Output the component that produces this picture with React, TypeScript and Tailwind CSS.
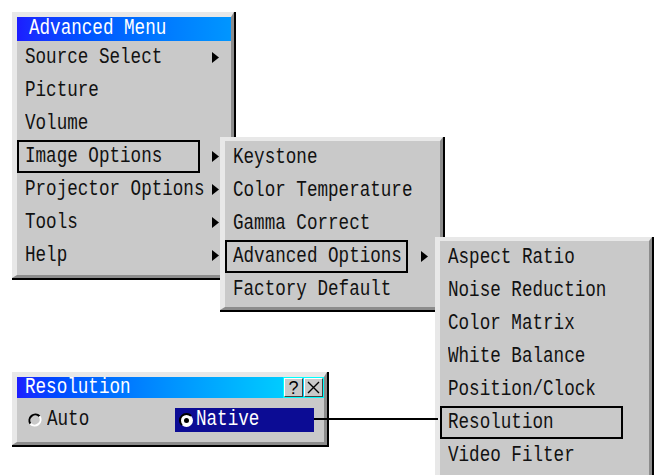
import React from 'react';

type Item = { label: string; arrow?: boolean; selected?: boolean };

const mono = "font-['Liberation_Mono',monospace] text-[17.6px] leading-none";

const Label = ({ children, className = '' }: { children: React.ReactNode; className?: string }) => (
  <span className={`inline-block origin-center scale-y-[1.3] whitespace-pre ${mono} ${className}`}>{children}</span>
);

const Arrow = () => (
  <svg width="7" height="11" viewBox="0 0 7 11">
    <path d="M0 0 L7 5.5 L0 11 Z" fill="#000" />
  </svg>
);

const Row = ({ item, arrowGap }: { item: Item; arrowGap: string }) => (
  <div className="flex h-[33px] items-center">
    <div
      className={`flex h-full w-[183px] shrink-0 items-center border-2 pl-[6px] ${
        item.selected ? 'border-black' : 'border-transparent'
      }`}
    >
      <Label className="text-[#111]">{item.label}</Label>
    </div>
    {item.arrow && <div className={`flex items-center ${arrowGap}`}><Arrow /></div>}
  </div>
);

// raised grey window: light top/left, grey + black bottom/right
const Panel = ({
  className,
  top = 'border-t-[5px]',
  children,
}: {
  className: string;
  top?: string;
  children: React.ReactNode;
}) => (
  <div className={`absolute bg-black pr-[2px] pb-[2px] ${className}`}>
    <div
      className={`h-full border-l-[5px] border-r-[3px] border-b-[3px] ${top} border-t-[#e8e8e8] border-l-[#e8e8e8] border-r-[#8c8c8c] border-b-[#8c8c8c] bg-[#c9c9c9]`}
    >
      {children}
    </div>
  </div>
);

const mainMenu: Item[] = [
  { label: 'Source Select', arrow: true },
  { label: 'Picture' },
  { label: 'Volume' },
  { label: 'Image Options', arrow: true, selected: true },
  { label: 'Projector Options', arrow: true },
  { label: 'Tools', arrow: true },
  { label: 'Help', arrow: true },
];

const imageMenu: Item[] = [
  { label: 'Keystone' },
  { label: 'Color Temperature' },
  { label: 'Gamma Correct' },
  { label: 'Advanced Options', arrow: true, selected: true },
  { label: 'Factory Default' },
];

const advancedMenu: Item[] = [
  { label: 'Aspect Ratio' },
  { label: 'Noise Reduction' },
  { label: 'Color Matrix' },
  { label: 'White Balance' },
  { label: 'Position/Clock' },
  { label: 'Resolution', selected: true },
  { label: 'Video Filter' },
];

const RadioOff = () => (
  <svg width="14" height="14" viewBox="0 0 14 14">
    <circle cx="7" cy="7" r="6" fill="#c9c9c9" />
    <path d="M11.6 3.2 A6 6 0 0 0 2.4 10.8" fill="none" stroke="#000" strokeWidth="2" />
    <path d="M2.4 10.8 A6 6 0 0 0 11.6 3.2" fill="none" stroke="#fff" strokeWidth="2" />
  </svg>
);

const RadioOn = () => (
  <svg width="15" height="15" viewBox="0 0 15 15">
    <circle cx="7.5" cy="7.5" r="6.5" fill="#fff" />
    <path d="M12.1 2.9 A6.5 6.5 0 0 0 2.9 12.1" fill="none" stroke="#000" strokeWidth="2" />
    <circle cx="7.5" cy="7.5" r="2.5" fill="#000" />
  </svg>
);

const TitleButton = ({ children }: { children: React.ReactNode }) => (
  <div className="flex h-[19px] w-[19px] items-center justify-center border border-t-white border-l-white border-r-[#404040] border-b-[#404040] bg-[#c9c9c9]">
    {children}
  </div>
);

export default function App() {
  return (
    <div className="relative h-[475px] w-[656px] overflow-hidden bg-white">
      {/* Advanced Menu */}
      <Panel className="left-[12px] top-[12px] h-[268px] w-[224px]">
        <div className="flex h-[24px] items-center bg-linear-to-r from-[#1c1cff] to-[#0096ff] pl-[12px]">
          <Label className="text-white">Advanced Menu</Label>
        </div>
        {mainMenu.map((it) => (
          <Row key={it.label} item={it} arrowGap="ml-[12px]" />
        ))}
      </Panel>

      {/* Image Options submenu */}
      <Panel className="left-[220px] top-[137px] h-[175px] w-[225px]" top="border-t-[4px]">
        {imageMenu.map((it) => (
          <Row key={it.label} item={it} arrowGap="ml-[13px]" />
        ))}
      </Panel>

      {/* Advanced Options submenu */}
      <Panel className="left-[435px] top-[237px] h-[250px] w-[219px]" top="border-t-[4px]">
        {advancedMenu.map((it) => (
          <Row key={it.label} item={it} arrowGap="ml-[13px]" />
        ))}
      </Panel>

      {/* Resolution dialog */}
      <Panel className="left-[12px] top-[372px] h-[75px] w-[317px]">
        <div className="flex h-[21px] items-center bg-linear-to-r from-[#1c1cff] to-[#00e0ff] pl-[8px]">
          <Label className="text-white">Resolution</Label>
          <div className="ml-auto flex h-[21px] items-center gap-[1px] border border-[#00ffff]">
            <TitleButton>
              <span className="font-['Liberation_Sans',sans-serif] text-[18px] leading-none text-black">?</span>
            </TitleButton>
            <TitleButton>
              <svg width="13" height="13" viewBox="0 0 13 13">
                <path d="M1 1 L12 12 M12 1 L1 12" stroke="#000" strokeWidth="1.4" />
              </svg>
            </TitleButton>
          </div>
        </div>
        <div className="flex h-[44px] items-center pl-[11px] pr-[10px]">
          <div className="flex items-center gap-[5px]">
            <RadioOff />
            <Label className="text-[#111]">Auto</Label>
          </div>
          <div className="ml-auto flex h-[24px] w-[139px] items-center gap-[2px] bg-[#0c0c94] pl-[4px]">
            <RadioOn />
            <Label className="text-white">Native</Label>
          </div>
        </div>
      </Panel>

      {/* connector */}
      <div className="absolute left-[314px] top-[418px] h-[2px] w-[124px] bg-black" />
    </div>
  );
}
